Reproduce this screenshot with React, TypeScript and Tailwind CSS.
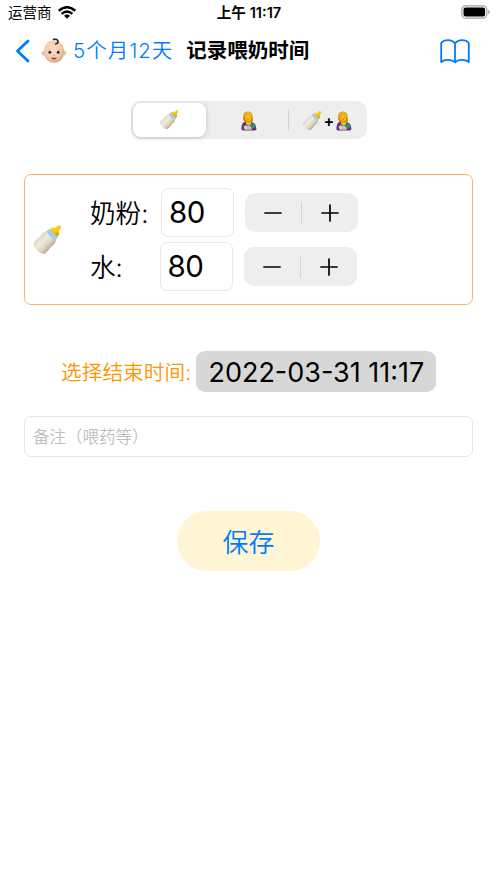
import { useState } from 'react'
import clsx from 'clsx'

interface IconProps {
  className?: string
}

function BottleIcon({ className }: IconProps) {
  return (
    <svg viewBox="0 0 30 30" className={clsx('shrink-0', className)}>
      <defs>
        <linearGradient id="milk" x1="0" x2="1" y1="0" y2="0">
          <stop offset="0" stopColor="#dcd5c5" />
          <stop offset="0.35" stopColor="#f1ecdf" />
          <stop offset="0.7" stopColor="#ddd5c2" />
          <stop offset="1" stopColor="#b5aa93" />
        </linearGradient>
        <linearGradient id="teat" x1="0" x2="1" y1="0" y2="0">
          <stop offset="0" stopColor="#ffdc3a" />
          <stop offset="0.6" stopColor="#fbbf0c" />
          <stop offset="1" stopColor="#e09606" />
        </linearGradient>
      </defs>
      <g transform="rotate(43 15 15)">
        <path d="M9 8.7Q15 6.6 21 8.7Q23.5 10.5 22.9 14Q22.2 17 22.8 20L23 25Q22.8 29.3 15 29.5Q7.2 29.3 7 25L7.2 20Q7.8 17 7.1 14Q6.5 10.5 9 8.7Z" fill="url(#milk)" />
        <path d="M9.3 4.8Q15 3.2 20.7 4.8L21.4 8.9Q15 11.3 8.6 8.9Z" fill="#9ac9e6" />
        <path d="M10.8 4.8L10.5 9.5M13.4 4.5V10.1M16.5 4.5V10.1M19.1 4.8L19.5 9.5" stroke="#bcdcef" strokeWidth="0.6" />
        <path d="M9.8 4.9Q9.4 1.8 12.2 1Q13.2 0.4 12.9-1.4Q12.6-4.4 15-4.4Q17.4-4.4 17.1-1.4Q16.8 0.4 17.8 1Q20.6 1.8 20.2 4.9Q15 7 9.8 4.9Z" fill="url(#teat)" />
        <path d="M11 4.2Q15 5.6 19 4.2" stroke="#dd9206" strokeWidth="0.5" fill="none" />
      </g>
    </svg>
  )
}

function NursingIcon({ className }: IconProps) {
  return (
    <svg viewBox="0 0 16 20" className={clsx('shrink-0', className)}>
      <path d="M3 10Q1.5 9 2.2 6.5Q1.9 0.4 6.8 0.4Q11.9 0.6 11.5 6Q12.6 8.8 11.4 11L5 12.5Z" fill="#d18e06" />
      <path d="M3.1 5.4Q3.2 0.8 7 0.8Q10.8 1 11 5Q7.8 4.8 6.1 3Q5.6 4.8 3.1 5.4Z" fill="#eeb21c" />
      <path d="M4.1 5.2Q6.1 4.6 6.7 3.4Q8 5 10.2 5.2Q10.5 9.8 7.2 10Q4.1 9.6 4.1 5.2Z" fill="#fcc62a" />
      <path d="M5.2 6.6H6.3M8 6.6H9.1M6.3 8.4Q7.2 8.9 8 8.4" stroke="#7a4b0c" strokeWidth="0.6" fill="none" />
      <path d="M0.5 18.5Q0 12.2 4.2 10.6L7.4 12.6L10.4 10.9Q14.8 11.6 15.4 17.8Q15.5 19.5 13.8 19.6H2.2Q0.8 19.6 0.5 18.5Z" fill="#6c2c8c" />
      <path d="M4.5 10.5Q7.4 12 10.2 10.5Q11 13.2 8 15Q5 14 4.5 10.5Z" fill="#f3b823" />
      <path d="M2.6 15.6Q5 13.8 7.4 15L11 15.3L10.2 19H4.8Q2.4 18.4 2.6 15.6Z" fill="#94d5e2" />
      <circle cx="4.7" cy="16.1" r="1.6" fill="#f2d16b" />
      <path d="M9.5 13.9Q12.3 11 14.3 13.6Q14.9 16.6 12.4 17.2Q9.4 17 9.5 13.9Z" fill="#2f8f69" />
      <path d="M6 18.8Q8.5 18.9 11 17.5" stroke="#d9a02a" strokeWidth="0.9" strokeLinecap="round" fill="none" />
    </svg>
  )
}

function BabyIcon() {
  return (
    <svg viewBox="0 0 26 26" className="h-[26px] w-[26px] shrink-0">
      <defs>
        <radialGradient id="skin" cx="0.45" cy="0.4" r="0.6">
          <stop offset="0" stopColor="#fde0c8" />
          <stop offset="0.7" stopColor="#f3cbad" />
          <stop offset="1" stopColor="#d9a385" />
        </radialGradient>
      </defs>
      <ellipse cx="2.6" cy="15" rx="1.9" ry="2.6" fill="#ebbd9c" />
      <ellipse cx="23.4" cy="15" rx="1.9" ry="2.6" fill="#ebbd9c" />
      <path d="M13 2.4C19.3 2.4 23 7 23 13.6C23 20.6 19 24.8 13 24.8S3 20.6 3 13.6C3 7 6.7 2.4 13 2.4Z" fill="url(#skin)" />
      <path d="M12.6 1.4Q16.6 0.6 17 3.4Q17.1 5.8 14.6 6" stroke="#33251f" strokeWidth="1.6" strokeLinecap="round" fill="none" />
      <ellipse cx="8.8" cy="14.3" rx="1.4" ry="1.5" fill="#33231c" />
      <ellipse cx="17.2" cy="14.3" rx="1.4" ry="1.5" fill="#33231c" />
      <path d="M7.3 11.6Q8.5 11 9.8 11.5M16.2 11.5Q17.5 11 18.7 11.6" stroke="#d8ab8b" strokeWidth="0.7" fill="none" />
      <path d="M12 17Q13 17.6 14 17" stroke="#cf987a" strokeWidth="0.8" fill="none" />
      <path d="M10 19.2Q13 20.2 16 19.2Q15.2 21.6 13 21.6Q10.8 21.6 10 19.2Z" fill="#96382e" />
    </svg>
  )
}

function StatusBar() {
  return (
    <header className="grid h-[26px] grid-cols-3 items-center pl-2 pr-[7px] text-black">
      <div className="flex items-center gap-[6px]">
        <span className="pt-px text-[14.5px] leading-none">运营商</span>
        <svg viewBox="0 0 18 13" className="mb-[2px] h-[13px] w-[18px]" fill="none" stroke="#000" strokeWidth="2.5">
          <path d="M0.8 4.8Q9-2.4 17.2 4.8" />
          <path d="M3.6 7.9Q9 3 14.4 7.9" />
          <path d="M6 9.8Q9 7.3 12 9.8L9 12.8Z" fill="#000" stroke="none" />
        </svg>
      </div>
      <div className="whitespace-nowrap pt-px text-center text-[14.6px] font-semibold leading-none">上午 11:17</div>
      <svg viewBox="0 0 29 14" className="mb-[2px] h-[14px] w-[29px] justify-self-end">
        <rect x="0.8" y="0.8" width="25" height="12.4" rx="3.6" fill="none" stroke="#a3a3a3" strokeWidth="1.2" />
        <rect x="2.5" y="2.5" width="21.6" height="9" rx="2" fill="#000" />
        <path d="M27.2 4.8Q28.7 5.4 28.7 7T27.2 9.2Z" fill="#a3a3a3" />
      </svg>
    </header>
  )
}

function NavBar() {
  return (
    <nav className="flex h-[50px] items-center pl-[15px] pr-[27px]">
      <svg viewBox="0 0 16 24" className="h-6 w-4" fill="none" stroke="#007aff" strokeWidth="2.8" strokeLinecap="round" strokeLinejoin="round">
        <path d="M13 2L2.5 12L13 22" />
      </svg>
      <div className="ml-[10px]">
        <BabyIcon />
      </div>
      <span className="ml-[6px] whitespace-nowrap pt-px text-[20.5px] font-[350] leading-none tracking-[1px] text-[#007aff]">5个月12天</span>
      <h1 className="ml-[13px] whitespace-nowrap pt-px text-[20.5px] font-semibold leading-none text-black">记录喂奶时间</h1>
      <svg viewBox="0 0 30 25" className="ml-auto h-[25px] w-[30px]" fill="none" stroke="#007aff" strokeWidth="1.8" strokeLinejoin="round">
        <path d="M15 4.5Q12.5 1.2 8 1.2T1.2 4V23Q3.5 20.8 8 20.8T15 23.3Q17.5 20.8 22 20.8T28.8 23V4Q26.5 1.2 22 1.2T15 4.5V23.3" />
      </svg>
    </nav>
  )
}

function FeedTypePicker() {
  return (
    <div className="mx-auto mt-[25px] flex h-[38px] w-[236px] items-center rounded-[10px] bg-[#eeeeee] p-[2px]">
      <button className="flex h-[34px] w-[73px] items-center justify-center rounded-[8px] bg-white shadow-[0_1px_4px_rgba(0,0,0,0.2)]">
        <BottleIcon className="h-5 w-5 overflow-visible" />
      </button>
      <button className="flex flex-1 items-center justify-center pl-[5px] pt-px">
        <NursingIcon className="h-5 w-4" />
      </button>
      <div className="h-[22px] w-px bg-[#d2d2d4]" />
      <button className="flex w-[76px] items-center justify-center gap-[2px] pl-px pt-px text-[16px] font-semibold leading-none">
        <BottleIcon className="h-5 w-5 overflow-visible" />
        <span>+</span>
        <NursingIcon className="h-5 w-4" />
      </button>
    </div>
  )
}

interface AmountRowProps {
  label: string
  value: number
  onChange: (value: number) => void
  labelWidth: string
}

function AmountRow({ label, value, onChange, labelWidth }: AmountRowProps) {
  return (
    <div className="flex h-[49px] items-center">
      <span className={clsx('whitespace-nowrap pt-[2px] text-[25.6px] font-[350] leading-none text-black', labelWidth)}>{label}</span>
      <div className="flex h-[49px] w-[73px] items-center rounded-[7px] border border-[#e8e8e8] pl-[7px] text-[29.5px] leading-none tracking-[-0.6px]">
        {value}
      </div>
      <div className="ml-[11px] flex h-[39px] w-[113px] items-center rounded-[10px] bg-[#eeeeee]">
        <button className="flex flex-1 justify-center" onClick={() => onChange(value - 10)}>
          <svg viewBox="0 0 18 18" className="h-[18px] w-[18px]" stroke="#000" strokeWidth="1.7" strokeLinecap="round">
            <path d="M1 9H17" />
          </svg>
        </button>
        <div className="h-[22px] w-px bg-[#d4d4d5]" />
        <button className="flex flex-1 justify-center" onClick={() => onChange(value + 10)}>
          <svg viewBox="0 0 18 18" className="h-[18px] w-[18px]" stroke="#000" strokeWidth="1.7" strokeLinecap="round">
            <path d="M1 9H17M9 1V17" />
          </svg>
        </button>
      </div>
    </div>
  )
}

export default function App() {
  const [milk, setMilk] = useState(80)
  const [water, setWater] = useState(80)

  return (
    <div className="h-[883px] w-[497px] overflow-hidden bg-white font-['Inter','Noto_Sans_CJK_SC',sans-serif]">
      <StatusBar />
      <NavBar />
      <main className="px-6">
        <FeedTypePicker />

        {/* Amounts */}
        <section className="mt-[35px] flex h-[131px] items-center rounded-[7px] border border-[#fdb469] pl-[7px]">
          <BottleIcon className="h-[30px] w-[30px] overflow-visible" />
          <div className="ml-[28px] flex flex-col gap-[5px]">
            <AmountRow label="奶粉:" value={milk} onChange={setMilk} labelWidth="w-[71px]" />
            <AmountRow label="水:" value={water} onChange={setWater} labelWidth="w-[69.5px]" />
          </div>
        </section>

        {/* End time */}
        <div className="mt-[46px] flex h-[41px] items-center pl-[37px]">
          <span className="w-[135.4px] whitespace-nowrap pt-[3px] text-[20.7px] font-[350] leading-none text-[#ff9500]">选择结束时间:</span>
          <div className="flex h-[41px] w-[240px] items-center justify-center whitespace-nowrap rounded-[9px] bg-[#d7d7d7] pt-px text-[27px] leading-none">
            2022-03-31 11:17
          </div>
        </div>

        <div className="mt-6 flex h-[41px] items-center rounded-[7px] border border-[#e6e6e6] pl-2 pt-[2px] text-[16.5px] font-[350] leading-none text-[#bebec0]">
          备注（喂药等）
        </div>

        <button className="mx-auto mt-[54px] flex h-[60px] w-[143px] items-center justify-center rounded-full bg-[#fff5d4] pt-[3px] text-[26px] font-[350] leading-none text-[#007aff]">
          保存
        </button>
      </main>
    </div>
  )
}
